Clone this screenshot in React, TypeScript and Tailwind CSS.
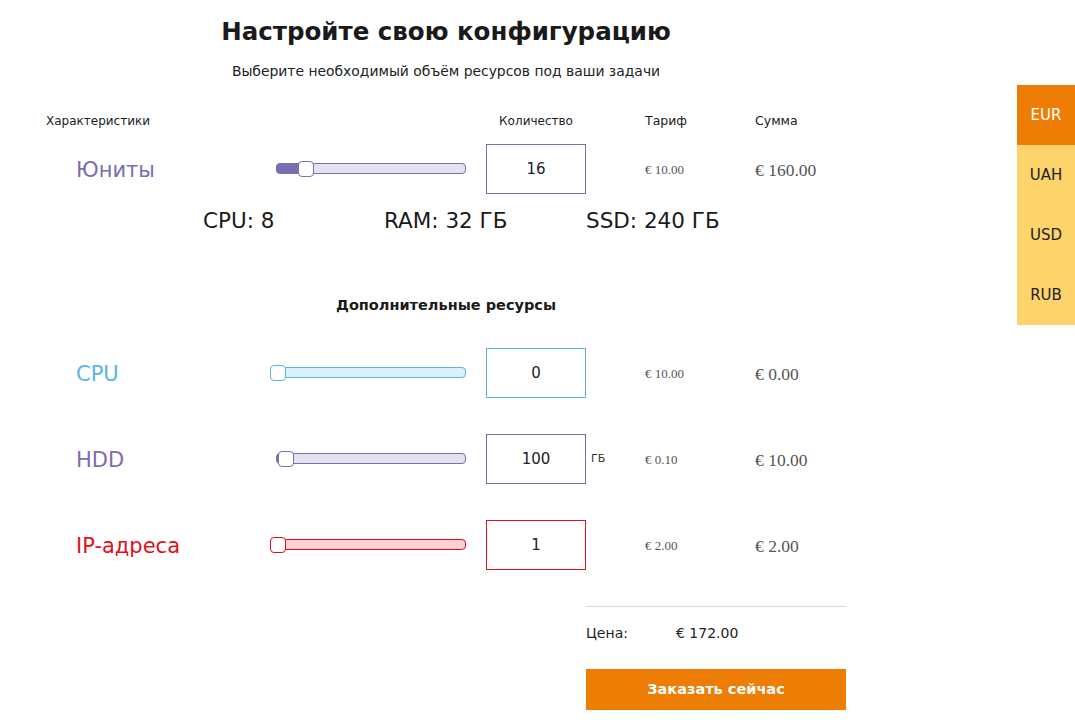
import React from "react";

const font = { fontFamily: '"DejaVu Sans", "Noto Sans", sans-serif' };
const serif = { fontFamily: '"Liberation Serif", "DejaVu Serif", serif' };

function Slider({ track, fill, border, start, thumbLeft, fillWidth }: { track: string; fill: string; border: string; start: number; thumbLeft: number; fillWidth: number }) {
  return (
    <div className="relative h-[18px] w-[196px]">
      <div
        className={`absolute top-[3px] h-[11px] rounded-[4px] border ${track} ${border}`}
        style={{ left: start, right: 0 }}
      />
      {fillWidth > 0 && (
        <div className={`absolute top-[3px] h-[11px] rounded-l-[5px] ${fill}`} style={{ left: start, width: fillWidth }} />
      )}
      <div
        className={`absolute top-[1px] h-[16px] w-[16px] rounded-[4px] border bg-white ${border}`}
        style={{ left: thumbLeft }}
      />
    </div>
  );
}

type RowProps = {
  label: string;
  labelColor: string;
  slider: React.ReactNode;
  value: string;
  inputBorder: string;
  unit?: string;
  tariff: string;
  sum: string;
};

function Row({ label, labelColor, slider, value, inputBorder, unit, tariff, sum }: RowProps) {
  return (
    <div className="flex h-[50px] items-center">
      <div className={`w-[270px] pl-[76px] pt-[4px] text-[21px] ${labelColor}`}>{label}</div>
      <div className="w-[216px]">{slider}</div>
      <div className={`flex h-[50px] w-[100px] items-center justify-center border text-[15px] text-[#222] ${inputBorder}`}>{value}</div>
      <div className="w-[59px] pl-[5px] text-[11px] text-[#333]">{unit ?? ""}</div>
      <div className="w-[110px] pt-[2px] text-[13px] text-[#555]" style={serif}>{tariff}</div>
      <div className="pt-[2px] text-[17.5px] text-[#555]" style={serif}>{sum}</div>
    </div>
  );
}

export default function App() {
  return (
    <div className="relative h-[720px] w-[1075px] overflow-hidden bg-white text-[#222]" style={font}>
      <div className="w-[892px]">
        <h1 className="pt-[15px] text-center text-[24.5px] font-bold leading-[34px] text-[#1a1a1a]">Настройте свою конфигурацию</h1>
        <p className="mt-[12px] text-center text-[13.9px] leading-[20px] text-[#222]">Выберите необходимый объём ресурсов под ваши задачи</p>

        <div className="mt-[31px] flex text-[12.5px] leading-[18px]">
          <div className="w-[486px] pl-[46px] text-[12px]">Характеристики</div>
          <div className="w-[100px] text-center text-[12px]">Количество</div>
          <div className="w-[59px]" />
          <div className="w-[110px]">Тариф</div>
          <div>Сумма</div>
        </div>

        <div className="mt-[14px]">
          <Row
            label="Юниты"
            labelColor="text-[#7b6db0]"
            slider={<Slider track="bg-[#e5e2f0]" fill="bg-[#7b6db0]" border="border-[#7b6db0]" start={6} thumbLeft={28} fillWidth={26} />}
            value="16"
            inputBorder="border-[#7b6db0]"
            tariff="€ 10.00"
            sum="€ 160.00"
          />
        </div>

        <div className="mt-[13px] flex text-[21.5px] leading-[28px] text-[#1a1a1a]">
          <div className="w-[384px] pl-[203px]">CPU: 8</div>
          <div className="w-[202px]">RAM: 32 ГБ</div>
          <div>SSD: 240 ГБ</div>
        </div>

        <div className="mt-[60px] text-center text-[14.5px] font-bold leading-[20px] text-[#1a1a1a]">Дополнительные ресурсы</div>

        <div className="mt-[33px] flex flex-col gap-[36px]">
          <Row
            label="CPU"
            labelColor="text-[#5ab4e8]"
            slider={<Slider track="bg-[#dcf0fa]" fill="bg-[#5ab4e8]" border="border-[#5ab4e8]" start={0} thumbLeft={0} fillWidth={0} />}
            value="0"
            inputBorder="border-[#5ab4e8]"
            tariff="€ 10.00"
            sum="€ 0.00"
          />
          <Row
            label="HDD"
            labelColor="text-[#7b6db0]"
            slider={<Slider track="bg-[#e5e2f0]" fill="bg-[#7b6db0]" border="border-[#7b6db0]" start={6} thumbLeft={8} fillWidth={6} />}
            value="100"
            inputBorder="border-[#7b6db0]"
            unit="ГБ"
            tariff="€ 0.10"
            sum="€ 10.00"
          />
          <Row
            label="IP-адреса"
            labelColor="text-[#e0101a]"
            slider={<Slider track="bg-[#fad0d4]" fill="bg-[#e0101a]" border="border-[#e0101a]" start={0} thumbLeft={0} fillWidth={0} />}
            value="1"
            inputBorder="border-[#e0101a]"
            tariff="€ 2.00"
            sum="€ 2.00"
          />
        </div>

        <div className="ml-[586px] mt-[36px] w-[260px] border-t border-[#d9d9d9]">
          <div className="mt-[16px] flex text-[14px] leading-[20px]">
            <div className="w-[90px]">Цена:</div>
            <div>€ 172.00</div>
          </div>
          <button className="mt-[26px] h-[41px] w-[260px] bg-[#ee7d05] text-[14.5px] font-bold text-white">Заказать сейчас</button>
        </div>
      </div>

      <div className="absolute right-0 top-[85px] flex w-[58px] flex-col text-[15px]">
        <div className="flex h-[60px] items-center justify-center bg-[#ee7d05] text-white">EUR</div>
        <div className="flex h-[60px] items-center justify-center bg-[#fcd46b]">UAH</div>
        <div className="flex h-[60px] items-center justify-center bg-[#fcd46b]">USD</div>
        <div className="flex h-[60px] items-center justify-center bg-[#fcd46b]">RUB</div>
      </div>
    </div>
  );
}
